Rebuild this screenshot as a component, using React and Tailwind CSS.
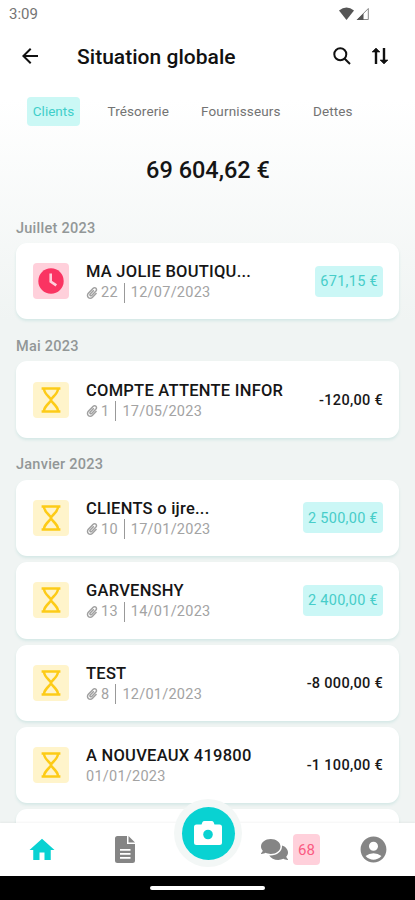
import { MdArrowBack, MdHome, MdAccountCircle } from "react-icons/md";
import { FaComments, FaPaperclip } from "react-icons/fa";

const sections = [
  { title: "Juillet 2023", rows: [
    { name: "MA JOLIE BOUTIQU...", count: "22", date: "12/07/2023", amount: "671,15 €", paid: true, late: true },
  ] },
  { title: "Mai 2023", rows: [
    { name: "COMPTE ATTENTE INFOR", count: "1", date: "17/05/2023", amount: "-120,00 €" },
  ] },
  { title: "Janvier 2023", rows: [
    { name: "CLIENTS o ijre...", count: "10", date: "17/01/2023", amount: "2 500,00 €", paid: true },
    { name: "GARVENSHY", count: "13", date: "14/01/2023", amount: "2 400,00 €", paid: true },
    { name: "TEST", count: "8", date: "12/01/2023", amount: "-8 000,00 €" },
    { name: "A NOUVEAUX 419800", date: "01/01/2023", amount: "-1 100,00 €" },
    { name: "", amount: "" },
  ] },
];

function Hourglass() {
  return (
    <svg width="20" height="26" viewBox="0 0 20 26" fill="none" stroke="#fdcb17" strokeWidth="2.5">
      <path d="M.6 1.6H19.4M.6 24.4H19.4" />
      <path d="M3 2C3.500 8 10 10.500 10 13C10 15.500 3.500 18 3 24M17 2C16.500 8 10 10.500 10 13C10 15.500 16.500 18 17 24" />
    </svg>
  );
}

function Clock() {
  return (
    <svg width="26" height="26" viewBox="0 0 26 26" fill="none">
      <circle cx="13" cy="13" r="12.700" fill="#fa3462" />
      <path d="M12.700 5.500V13.500L18.300 17.300" stroke="#ffd0db" strokeWidth="2.600" />
    </svg>
  );
}

function Row({ row }) {
  return (
    <div className="flex h-[76.4px] shrink-0 items-center rounded-[11px] bg-white pl-[17px] pr-4 shadow-[0_2px_3px_#d5e8e6]">
      {row.name && (
        <>
          <div className={`flex size-9 shrink-0 items-center justify-center rounded-[4px] ${row.late ? "bg-[#ffd0db]" : "bg-[#fff4cb]"}`}>
            {row.late ? <Clock /> : <Hourglass />}
          </div>
          <div className="ml-[17px] flex-1 whitespace-nowrap pt-[2px]">
            <div className="text-[16.5px] leading-[21px] font-medium tracking-[0.25px] text-[#161616]">{row.name}</div>
            <div className="flex h-[21px] items-center text-[14.5px] leading-[21px] tracking-[0.25px] text-[#a3a3a3]">
              {row.count && (
                <>
                  <FaPaperclip className="mr-[3px] size-[12px] text-[#a0a0a0]" />
                  <span>{row.count}</span>
                  <span className="mx-[6px] h-5 w-px bg-[#999]" />
                </>
              )}
              <span>{row.date}</span>
            </div>
          </div>
          <div className={row.paid ? "flex h-[31px] items-center rounded-[4px] bg-[#cbf7f6] pl-[5px] pr-[5px] pt-[2px] text-[14.5px] tracking-[0.3px] text-[#47cdc9]" : "pt-[2px] text-[14.500px] font-medium tracking-[0.3px] text-[#181818]"}>
            {row.amount}
          </div>
        </>
      )}
    </div>
  );
}

export default function App() {
  return (
    <div className="flex h-[900px] w-[415px] flex-col overflow-hidden bg-[linear-gradient(#fff_100px,#f0f4f3_320px)] font-['Roboto',sans-serif]">
      <div className="flex h-7 shrink-0 items-center justify-between pl-[9px] pr-[45px] text-[15px] text-[#747474]">
        <span className="pt-px">3:09</span>
        <svg width="31" height="14" viewBox="0 0 31 14">
          <path d="M0 3.500Q7.500-2.500 15 3.500L7.500 13Z" fill="#555" />
          <path d="M29.300 1.500V12.500H18.500Z" fill="none" stroke="#888" />
          <path d="M24.500 6.300V13H17.500Z" fill="#555" />
        </svg>
      </div>
      <header className="flex h-14 shrink-0 items-center pl-[18px] pr-[26px] text-[#111]">
        <MdArrowBack className="size-6" />
        <h1 className="ml-[35px] flex-1 pt-[3px] text-[21px] font-medium tracking-[0.03px]">Situation globale</h1>
        <svg width="18" height="18" viewBox="0 0 18 18" fill="none" stroke="#111" strokeWidth="2">
          <circle cx="7.300" cy="7.300" r="6" />
          <path d="M11.700 11.700L17 17" />
        </svg>
        <svg className="ml-[20px]" width="18" height="18" viewBox="0 0 18 18" fill="none" stroke="#111" strokeWidth="2.400">
          <path d="M5 17V3M13 1V14" />
          <path d="M1 5L5 1L9 5ZM9 13L13 17L17 13Z" fill="#111" strokeWidth=".6" />
        </svg>
      </header>
      <nav className="flex h-[54px] shrink-0 items-center pl-[27px] text-[13.500px] text-[#737373]">
        <span className="flex h-[29px] w-[53px] items-center justify-center rounded-[4px] bg-[#cbf8f5] text-[#3fcfca]">Clients</span>
        <span className="ml-[27.500px] w-[93.500px] tracking-[0.1px]">Trésorerie</span>
        <span className="w-[112px] tracking-[0.150px]">Fournisseurs</span>
        <span className="tracking-[0.1px]">Dettes</span>
      </nav>
      <div className="flex h-[64px] shrink-0 items-center justify-center pt-px pl-px text-[23.500px] font-medium text-[#151515]">69 604,62 €</div>
      <main className="flex h-[621px] shrink-0 flex-col overflow-hidden px-4">
        {sections.map((section) => (
          <section key={section.title} className="shrink-0 pt-[15px]">
            <h2 className="flex h-[26px] items-center pb-[3px] text-[14.500px] font-medium tracking-[0.250px] text-[#929797]">{section.title}</h2>
            <div className="flex flex-col gap-[6px] pb-[1px]">
              {section.rows.map((row, i) => <Row key={i} row={row} />)}
            </div>
          </section>
        ))}
      </main>
      <footer className="relative flex h-[53px] shrink-0 items-center bg-white text-[#858585] shadow-[0_-1px_2px_#0000000b]">
        <MdHome className="ml-[27px] size-[30px] text-[#09d2d2]" />
        <svg className="ml-[58px]" width="20" height="27" viewBox="0 0 20 27">
          <path d="M2.500 0H12V8H20V24.500Q20 27 17.500 27H2.500Q0 27 0 24.500V2.500Q0 0 2.500 0Z" fill="currentColor" />
          <path d="M13.500 0L20 6.500H13.500Z" fill="currentColor" />
          <path d="M5 13.800H15.500M5 17.800H15.500M5 21.800H15.500" stroke="#fff" strokeWidth="1.700" />
        </svg>
        <FaComments className="ml-[126px] size-[27px]" />
        <span className="ml-[5px] flex h-[31px] w-[27px] items-center justify-center rounded-[4px] bg-[#ffd0db] pt-px text-[15px] text-[#fa5b82]">68</span>
        <MdAccountCircle className="ml-[38px] size-[31px]" />
        <div className="absolute -top-[24px] left-[174px] flex size-[68px] items-center justify-center rounded-full bg-[#f3f7f6]">
          <div className="flex size-[53px] items-center justify-center rounded-full bg-[#09d2d2]">
            <svg width="28" height="24" viewBox="0 0 28 24">
              <path d="M2.500 3.500H7.500L8.500 1Q9 0 10.500 0H17.500Q19 0 19.500 1L20.500 3.500H25.500Q28 3.500 28 6V21.500Q28 24 25.500 24H2.500Q0 24 0 21.500V6Q0 3.500 2.500 3.500Z" fill="#fff" />
              <circle cx="14" cy="13.500" r="4.800" fill="#09d2d2" />
            </svg>
          </div>
        </div>
      </footer>
      <div className="flex h-6 shrink-0 items-center justify-center bg-black">
        <div className="h-1 w-[115px] rounded-full bg-white" />
      </div>
    </div>
  );
}
